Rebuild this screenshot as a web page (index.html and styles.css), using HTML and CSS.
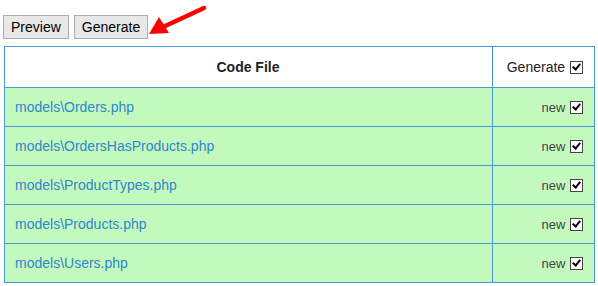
FILE: index.html
```html
<!DOCTYPE html>
<html lang="en">
<head>
    <meta charset="UTF-8">
    <title>Code Generator</title>
    <link rel="stylesheet" href="styles.css">
</head>
<body>
    <div class="actions">
        <button class="btn">Preview</button>
        <button class="btn">Generate</button>
        <svg class="arrow" width="62" height="34" viewBox="0 0 62 34">
            <line x1="57" y1="4" x2="16" y2="23" stroke="#f00" stroke-width="4.5" stroke-linecap="round"/>
            <polygon points="2,30 12,13 22,29" fill="#f00"/>
        </svg>
    </div>
    <table class="files">
        <tr>
            <th class="file">Code File</th>
            <th class="gen">Generate <span class="box"></span></th>
        </tr>
        <tr>
            <td class="file"><a href="#">models\Orders.php</a></td>
            <td class="gen">new <span class="box"></span></td>
        </tr>
        <tr>
            <td class="file"><a href="#">models\OrdersHasProducts.php</a></td>
            <td class="gen">new <span class="box"></span></td>
        </tr>
        <tr>
            <td class="file"><a href="#">models\ProductTypes.php</a></td>
            <td class="gen">new <span class="box"></span></td>
        </tr>
        <tr>
            <td class="file"><a href="#">models\Products.php</a></td>
            <td class="gen">new <span class="box"></span></td>
        </tr>
        <tr>
            <td class="file"><a href="#">models\Users.php</a></td>
            <td class="gen">new <span class="box"></span></td>
        </tr>
    </table>
</body>
</html>
```

FILE: styles.css
```css
body {
    font-family: Arial, "Liberation Sans", sans-serif;
    font-size: 14px;
    margin: 0;
    padding: 15px 3px 0 4px;
    color: #333;
}
.actions {
    position: relative;
    display: flex;
    gap: 5px;
    margin-left: -1px;
    margin-bottom: 7px;
}
.btn {
    font-family: Arial, "Liberation Sans", sans-serif;
    font-size: 14px;
    color: #000;
    height: 24px;
    padding: 0 7px;
    background: #e8e8e8;
    border: 1px solid #adadad;
    border-radius: 0;
}
.arrow {
    position: absolute;
    left: 144px;
    top: -11px;
}
.files {
    width: 591px;
    border-collapse: collapse;
}
th, td {
    border: 1px solid #4a98d6;
    padding: 0 11px 0 10px;
}
th {
    height: 40px;
    background: #fff;
    color: #222;
}
td {
    height: 38px;
    background: #c4f9be;
}
th.file {
    text-align: center;
}
.file {
    width: 466px;
}
.gen {
    text-align: right;
    white-space: nowrap;
    font-weight: normal;
    font-size: 13px;
}
th.gen {
    font-size: 14px;
    color: #222;
}
td.gen {
    color: #444;
}
a {
    color: #2f86cc;
    text-decoration: none;
}
.box {
    display: inline-block;
    width: 11px;
    height: 11px;
    border: 1px solid #444;
    background: #fff;
    vertical-align: -2px;
    position: relative;
    margin-left: 1px;
}
.box::after {
    content: "";
    position: absolute;
    left: 3px;
    top: 0px;
    width: 3px;
    height: 6px;
    border: solid #000;
    border-width: 0 2px 2px 0;
    transform: rotate(40deg);
}
```
